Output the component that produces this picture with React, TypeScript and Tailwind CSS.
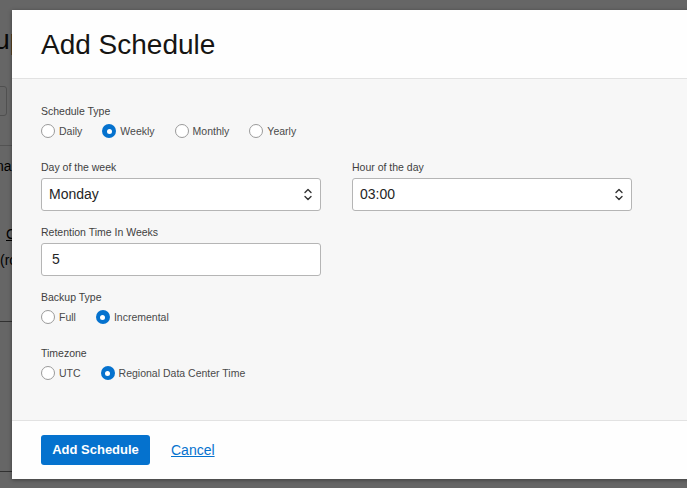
import React from "react";

const font = { fontFamily: '"Liberation Sans", Arial, Helvetica, sans-serif' };

function Radio({ label, checked, gap }: { label: string; checked?: boolean; gap: string }) {
  return (
    <div className={`flex items-center ${gap}`}>
      {checked ? (
        <span className="w-[14px] h-[14px] rounded-full bg-[#0572ce] flex items-center justify-center">
          <span className="w-[5px] h-[5px] rounded-full bg-white" />
        </span>
      ) : (
        <span className="w-[14px] h-[14px] rounded-full border border-[#9a9a9a] bg-white" />
      )}
      <span className="ml-[4px] text-[10.5px] text-[#4a4a4a] leading-none">{label}</span>
    </div>
  );
}

function Chevrons() {
  return (
    <svg width="10" height="15" viewBox="0 0 10 15" fill="none" stroke="#333" strokeWidth="1.4" strokeLinecap="round" strokeLinejoin="round">
      <path d="M2 5.5 L5 2.5 L8 5.5" />
      <path d="M2 9.5 L5 12.5 L8 9.5" />
    </svg>
  );
}

function SelectBox({ value }: { value: string }) {
  return (
    <div className="w-[280px] h-[33px] rounded-[3px] border border-[#b5b5b5] bg-white flex items-center justify-between pl-[7px] pr-[7px]">
      <span className="text-[14px] text-[#252525]">{value}</span>
      <Chevrons />
    </div>
  );
}

function Label({ children }: { children: React.ReactNode }) {
  return <div className="text-[10.5px] text-[#3f3f3f] leading-[12px]">{children}</div>;
}

export default function App() {
  return (
    <div className="relative w-[687px] h-[488px] overflow-hidden bg-white" style={font}>
      {/* underlying page */}
      <div className="flex flex-col text-black">
        <div className="h-[24px]" />
        <div className="ml-[-68px] text-[28px] leading-[32px] text-[#161513]">Backups</div>
        <div className="h-[30px]" />
        <div className="ml-[-60px] w-[67px] h-[30px] border border-[#c7c7c7] rounded-[3px]" />
        <div className="h-[29px]" />
        <div className="h-px bg-[#cfcfcf]" />
        <div className="h-[12px]" />
        <div className="ml-[-22px] text-[14px] leading-[16px]">Dena</div>
        <div className="h-[52px]" />
        <div className="ml-[6px] text-[14px] leading-[16px] underline">C</div>
        <div className="h-[10px]" />
        <div className="ml-[0px] text-[14px] leading-[16px]">(rc</div>
        <div className="h-[53px]" />
        <div className="h-px bg-[#7a7a7a]" />
        <div className="h-[149px]" />
        <div className="h-px bg-[#7a7a7a]" />
      </div>

      {/* overlay */}
      <div className="absolute inset-0 bg-[rgba(0,0,0,0.6)]" />

      {/* dialog */}
      <div className="absolute left-[12px] top-[10px] w-[700px] h-[469px] bg-white flex flex-col shadow-[0_1px_4px_rgba(0,0,0,0.4)]">
        <div className="h-[69px] border-b border-[#e2e2e2] bg-[#fefefe] flex items-center pl-[29px]">
          <h1 className="text-[28px] text-[#161513] leading-none mt-[1px]">Add Schedule</h1>
        </div>
        <div className="flex-1 bg-[#f7f7f7] pl-[29px] pt-[26px] flex flex-col">
          <Label>Schedule Type</Label>
          <div className="flex items-center mt-[7px]">
            <Radio label="Daily" gap="mr-[20px]" />
            <Radio label="Weekly" checked gap="mr-[20px]" />
            <Radio label="Monthly" gap="mr-[20px]" />
            <Radio label="Yearly" gap="" />
          </div>

          <div className="flex gap-[31px] mt-[23px]">
            <div className="flex flex-col">
              <Label>Day of the week</Label>
              <div className="mt-[5px]">
                <SelectBox value="Monday" />
              </div>
            </div>
            <div className="flex flex-col">
              <Label>Hour of the day</Label>
              <div className="mt-[5px]">
                <SelectBox value="03:00" />
              </div>
            </div>
          </div>

          <div className="mt-[15px]">
            <Label>Retention Time In Weeks</Label>
          </div>
          <div className="mt-[5px] w-[280px] h-[33px] rounded-[3px] border border-[#b5b5b5] bg-white flex items-center pl-[10px]">
            <span className="text-[14px] text-[#252525]">5</span>
          </div>

          <div className="mt-[15px]">
            <Label>Backup Type</Label>
          </div>
          <div className="flex items-center mt-[7px]">
            <Radio label="Full" gap="mr-[20px]" />
            <Radio label="Incremental" checked gap="" />
          </div>

          <div className="mt-[23px]">
            <Label>Timezone</Label>
          </div>
          <div className="flex items-center mt-[7px]">
            <Radio label="UTC" gap="mr-[20px]" />
            <Radio label="Regional Data Center Time" checked gap="" />
          </div>
        </div>
        <div className="h-[59px] border-t border-[#e2e2e2] bg-[#fefefe] flex items-center pl-[29px]">
          <button className="w-[109px] h-[30px] rounded-[3px] bg-[#0572ce] text-white text-[13px] font-bold">
            Add Schedule
          </button>
          <a className="ml-[21px] text-[14px] text-[#0572ce] underline cursor-pointer">Cancel</a>
        </div>
      </div>
    </div>
  );
}
